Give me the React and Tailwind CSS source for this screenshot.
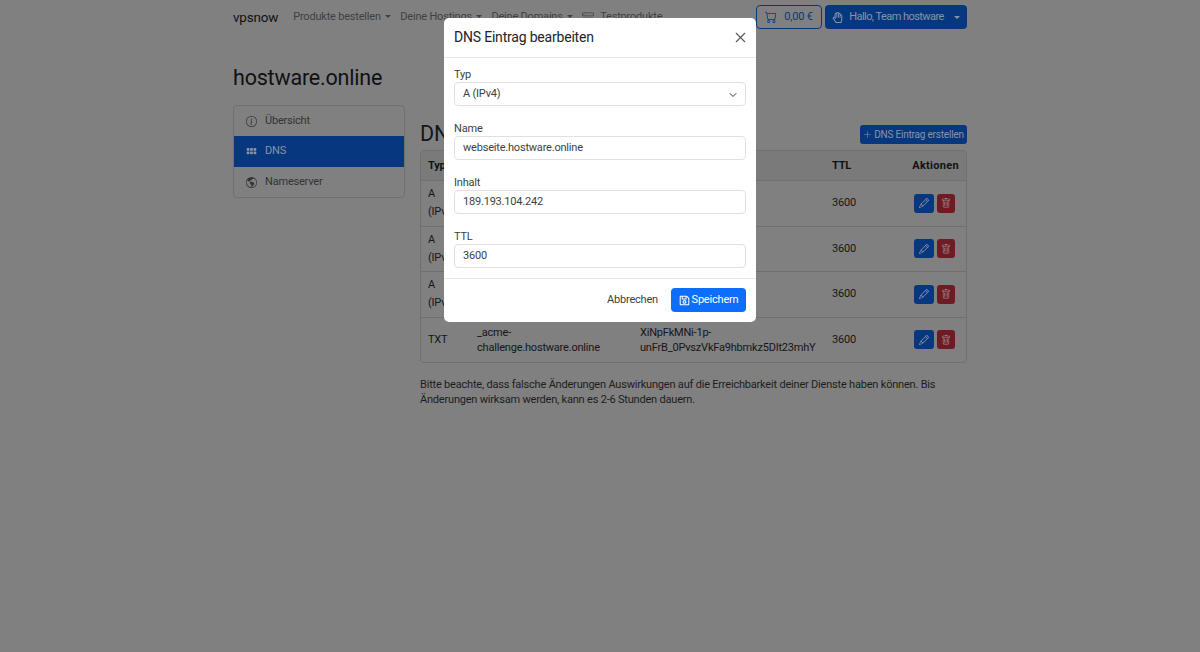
import React from "react";
import { X, ChevronDown } from "lucide-react";
import { BsCart, BsGrid3X2GapFill, BsGlobeAmericas, BsInfoCircle, BsHddStack, BsPencil, BsTrash, BsPlusLg } from "react-icons/bs";
import { FaRegHandPaper, FaRegSave } from "react-icons/fa";

const font = { fontFamily: 'Roboto,"Noto Sans",sans-serif', letterSpacing: "-0.2px" };

function Caret() {
  return <span className="inline-block ml-[4px] align-middle w-0 h-0 border-x-[3px] border-x-transparent border-t-[3.5px] border-t-current" />;
}

function Field({ label, value, select, last }) {
  return (
    <div className={last ? "" : "mb-[16px]"}>
      <div className="text-[11px] leading-[14px] text-[#3b3f44]">{label}</div>
      <div className="h-[24px] border border-[#dee2e6] rounded-[4px] flex items-center justify-between pl-[8px] pr-[6px] pt-[1px] text-[11px] text-[#3b3f44]">
        <span>{value}</span>
        {select && <ChevronDown size={12} strokeWidth={2} className="text-[#343a40]" />}
      </div>
    </div>
  );
}

const rows = [
  { t: ["A", "(IPv4)"] },
  { t: ["A", "(IPv4)"] },
  { t: ["A", "(IPv4)"] },
  { t: ["TXT"], n: ["_acme-", "challenge.hostware.online"], c: ["XiNpFkMNi-1p-", "unFrB_0PvszVkFa9hbmkz5DIt23mhY"] },
];

export default function App() {
  return (
    <div className="relative h-[652px] w-[1200px] overflow-hidden bg-[#808080] text-[#151617] text-[11px]" style={font}>
      <div className="mx-auto w-[734px]">
        <nav className="flex items-center h-[34px]">
          <span className="text-[13.5px] text-[#101112] mr-[15px]">vpsnow</span>
          <div className="flex items-center gap-[9.5px] text-[#3f4041] text-[11px] flex-1">
            <span>Produkte bestellen<Caret /></span>
            <span>Deine Hostings<Caret /></span>
            <span>Deine Domains<Caret /></span>
            <span className="flex items-center gap-[6px]"><BsHddStack size={12} />Testprodukte</span>
          </div>
          <div className="flex gap-[3px]">
            <div className="h-[24px] w-[66px] rounded-[4px] border border-[#07387f] text-[#07387f] flex items-center justify-center gap-[7px]">
              <BsCart size={12} /><span>0,00 €</span>
            </div>
            <div className="h-[24px] w-[142px] rounded-[4px] bg-[#07387f] text-[#8a93a3] flex items-center justify-center gap-[6px] whitespace-nowrap">
              <FaRegHandPaper size={11} /><span className="tracking-[-0.55px]">Hallo, Team hostware</span><Caret />
            </div>
          </div>
        </nav>

        <h1 className="text-[21.5px] leading-[28px] mt-[30px] text-[#101112]">hostware.online</h1>

        <div className="flex mt-[13px] gap-[15px]">
          <aside className="w-[172px] shrink-0">
            <div className="border border-[#707070] rounded-[4px] overflow-hidden">
              <div className="h-[30px] flex items-center gap-[8px] pl-[12px] text-[#333]"><BsInfoCircle size={11} />Übersicht</div>
              <div className="h-[31px] flex items-center gap-[8px] pl-[12px] bg-[#07387f] text-[#8a93a3]"><BsGrid3X2GapFill size={11} />DNS</div>
              <div className="h-[30px] flex items-center gap-[8px] pl-[12px] text-[#333]"><BsGlobeAmericas size={11} />Nameserver</div>
            </div>
          </aside>
          <main className="flex-1">
            <div className="flex items-end justify-between h-[39px] mt-[6px]">
              <span className="text-[21.5px] leading-[28px] mb-[2px]">DNS</span>
              <span className="h-[19px] mb-[6px] w-[107px] rounded-[3px] bg-[#07387f] text-[#8a93a3] text-[10px] flex items-center justify-center gap-[2px] whitespace-nowrap"><BsPlusLg size={9} />DNS Eintrag erstellen</span>
            </div>
            <div className="border border-[#707070] rounded-[4px] overflow-hidden">
              <div className="h-[29px] flex items-center bg-[#7a7a7a] font-bold pt-[1px] px-[7px] text-[#111213]">
                <span className="w-[49px]">Typ</span><span className="w-[163px]">Name</span><span className="w-[192px]">Inhalt</span><span className="w-[60px]">TTL</span><span className="flex-1 text-right tracking-[0.3px]">Aktionen</span>
              </div>
              {rows.map((r, i) => (
                <div key={i} className="h-[45.5px] flex items-center pl-[7px] pr-[11px] border-t border-[#707070]">
                  <div className="w-[49px] leading-[18px]">{r.t.map(x => <div key={x}>{x}</div>)}</div>
                  <div className="w-[163px] leading-[15px]">{(r.n || []).map(x => <div key={x}>{x}</div>)}</div>
                  <div className="w-[192px] leading-[15px] whitespace-nowrap">{(r.c || []).map(x => <div key={x}>{x}</div>)}</div>
                  <div className="w-[60px]">3600</div>
                  <div className="flex-1 flex justify-end gap-[3px]">
                    <span className="w-[20px] h-[19px] rounded-[3px] bg-[#07387f] text-[#8a93a3] flex items-center justify-center"><BsPencil size={10} /></span>
                    <span className="w-[18px] h-[19px] rounded-[3px] bg-[#6e1b23] text-[#a08a8d] flex items-center justify-center"><BsTrash size={10} /></span>
                  </div>
                </div>
              ))}
            </div>
            <p className="mt-[14px] leading-[15px] text-[#1c1d1e] whitespace-nowrap">Bitte beachte, dass falsche Änderungen Auswirkungen auf die Erreichbarkeit deiner Dienste haben können. Bis<br />Änderungen wirksam werden, kann es 2-6 Stunden dauern.</p>
          </main>
        </div>
      </div>

      <div className="absolute left-[444px] top-[18px] w-[312px] h-[304px] bg-white rounded-[5px] flex flex-col">
        <div className="h-[40px] border-b border-[#e6e8ea] flex items-center justify-between pl-[10px] pr-[7px]">
          <span className="text-[14px] text-[#212529]">DNS Eintrag bearbeiten</span>
          <X size={17} strokeWidth={1.5} className="text-[#555]" />
        </div>
        <div className="px-[10px] pt-[10px] flex-1">
          <Field label="Typ" value="A (IPv4)" select />
          <Field label="Name" value="webseite.hostware.online" />
          <Field label="Inhalt" value="189.193.104.242" />
          <Field label="TTL" value="3600" last />
        </div>
        <div className="h-[44px] border-t border-[#e6e8ea] flex items-center justify-end gap-[13px] px-[10px] pb-[1px]">
          <span className="text-[11px] text-[#3b3f44]">Abbrechen</span>
          <span className="h-[24px] w-[75px] bg-[#0d6efd] text-white rounded-[4px] flex items-center justify-center gap-[2px] text-[11px]"><FaRegSave size={11} />Speichern</span>
        </div>
      </div>
    </div>
  );
}
